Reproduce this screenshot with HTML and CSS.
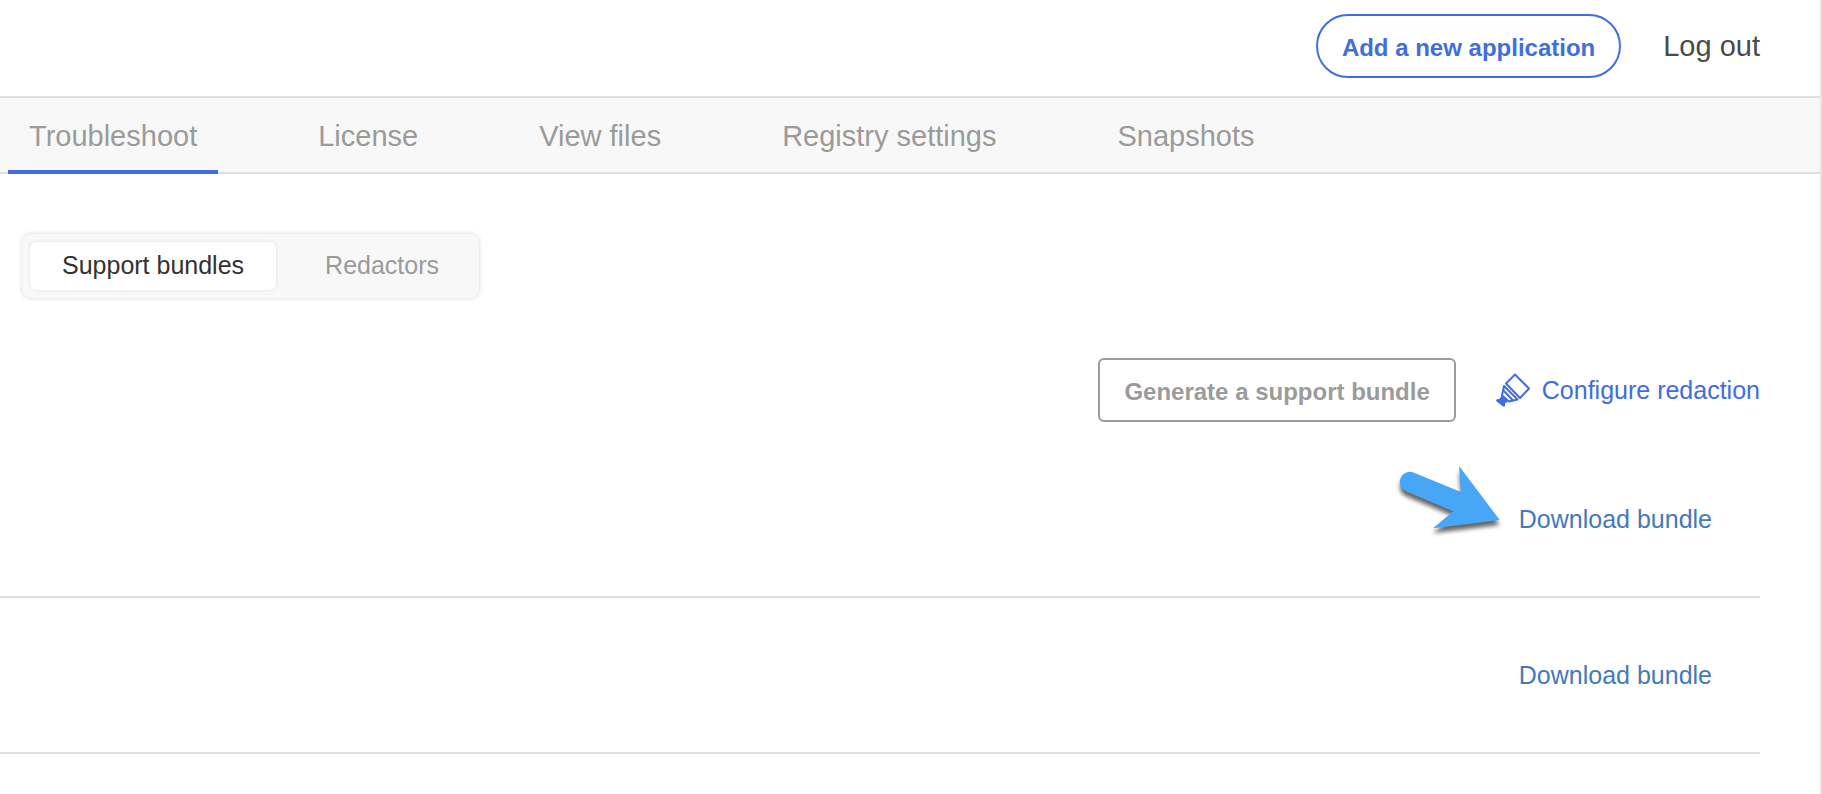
FILE: index.html
```html
<!DOCTYPE html>
<html lang="en">
<head>
<meta charset="utf-8">
<meta name="viewport" content="width=device-width, initial-scale=1">
<title>Troubleshoot</title>
<link rel="stylesheet" href="styles.css">
</head>
<body>
<div class="page">
  <header class="header">
    <button class="btn btn-round" type="button">Add a new application</button>
    <a class="logout" href="#">Log out</a>
  </header>
  <nav class="tabs">
    <a class="tab tab-active" href="#">Troubleshoot</a>
    <a class="tab" href="#">License</a>
    <a class="tab" href="#">View files</a>
    <a class="tab" href="#">Registry settings</a>
    <a class="tab" href="#">Snapshots</a>
  </nav>
  <main class="main">
    <div class="toggle">
      <button class="toggle-item toggle-active" type="button">Support bundles</button>
      <button class="toggle-item" type="button">Redactors</button>
    </div>
    <div class="actions">
      <button class="btn btn-gray" type="button">Generate a support bundle</button>
      <a class="configure" href="#">
        <svg class="marker" viewBox="0 0 36 36" aria-hidden="true">
          <g fill="none" stroke="currentColor" stroke-width="2" stroke-linejoin="round">
            <path d="M19 2.500 33 16.500 24 26 10 11.500Z"/>
            <path d="M8 14 6 23.500 13 29.500 21.500 27.500Z"/>
            <path d="M7.500 18.500 17 28.500"/>
          </g>
          <path d="M5.500 23 12 29.500 9 31.500 9 34.500 7 34.500 0 29 0.500 27.500 4 26.500Z" fill="currentColor"/>
        </svg>
        <span>Configure redaction</span>
      </a>
    </div>
    <ul class="bundles">
      <li class="bundle">
        <a class="download" href="#">Download bundle</a>
        <svg class="arrow" viewBox="36 60 360 252" aria-hidden="true">
          <path d="M102 98 243 156 237 78 359 240 159 265 220 214 78 154A30 30 0 0 1 102 98Z" fill="#48a6f6"/>
        </svg>
      </li>
      <li class="bundle">
        <a class="download" href="#">Download bundle</a>
      </li>
    </ul>
  </main>
</div>
</body>
</html>
```

FILE: styles.css
```css
* {
  box-sizing: border-box;
}

body {
  margin: 0;
  background: #fff;
  color: #4a4a4a;
  font-family: "Liberation Sans", Arial, sans-serif;
}

a {
  text-decoration: none;
}

button {
  font-family: inherit;
  cursor: pointer;
}

.page {
  min-height: 100vh;
  border-right: 2px solid #e6e6e6;
}

.header {
  display: flex;
  justify-content: flex-end;
  align-items: center;
  gap: 42px;
  padding: 14px 60px 18px;
  border-bottom: 2px solid #dfdfdf;
}

.btn {
  height: 64px;
  padding: 4px 24px 0;
  border: 2px solid;
  background: #fff;
  font-size: 24px;
  font-weight: 700;
}

.btn-round {
  border-radius: 32px;
  color: #406de0;
}

.btn-gray {
  border-radius: 6px;
  color: #9b9b9b;
}

.logout {
  color: #4a4a4a;
  font-size: 29px;
}

.tabs {
  display: flex;
  gap: 79px;
  padding-left: 8px;
  background: #f8f8f8;
  border-bottom: 2px solid #dfdfdf;
}

.tab {
  margin-bottom: -2px;
  padding: 4px 21px 0;
  border-bottom: 4px solid transparent;
  color: #9b9b9b;
  font-size: 29px;
  line-height: 68px;
}

.tab-active {
  border-bottom-color: #406de0;
}

.main {
  padding: 60px 60px 0 0;
}

.toggle {
  display: inline-flex;
  margin-left: 22px;
  padding: 8px;
  border-radius: 8px;
  background: #f8f8f8;
  box-shadow: 0 0 4px rgba(0, 0, 0, 0.16);
}

.toggle-item {
  height: 48px;
  padding: 0 32px 2px;
  border: 0;
  border-radius: 6px;
  background: none;
  color: #9b9b9b;
  font-size: 25px;
}

.toggle-item + .toggle-item {
  padding-left: 49px;
}

.toggle-active {
  background: #fff;
  color: #323232;
  box-shadow: 0 0 3px rgba(0, 0, 0, 0.12);
}

.actions {
  display: flex;
  justify-content: flex-end;
  align-items: center;
  gap: 40px;
  margin-top: 60px;
}

.configure {
  display: flex;
  align-items: center;
  gap: 10px;
  color: #406de0;
  font-size: 25px;
}

.marker {
  width: 36px;
  height: 36px;
}

.bundles {
  margin: 20px 0 0;
  padding: 0;
  list-style: none;
}

.bundle {
  position: relative;
  display: flex;
  justify-content: flex-end;
  align-items: center;
  height: 156px;
  padding-right: 48px;
  border-bottom: 2px solid #dfdfdf;
}

.download {
  color: #447ab7;
  font-size: 25px;
}

.arrow {
  position: absolute;
  top: 18px;
  right: 248px;
  width: 120px;
  height: 84px;
  filter: drop-shadow(0 5px 2px rgba(0, 0, 0, 0.6));
}
```
